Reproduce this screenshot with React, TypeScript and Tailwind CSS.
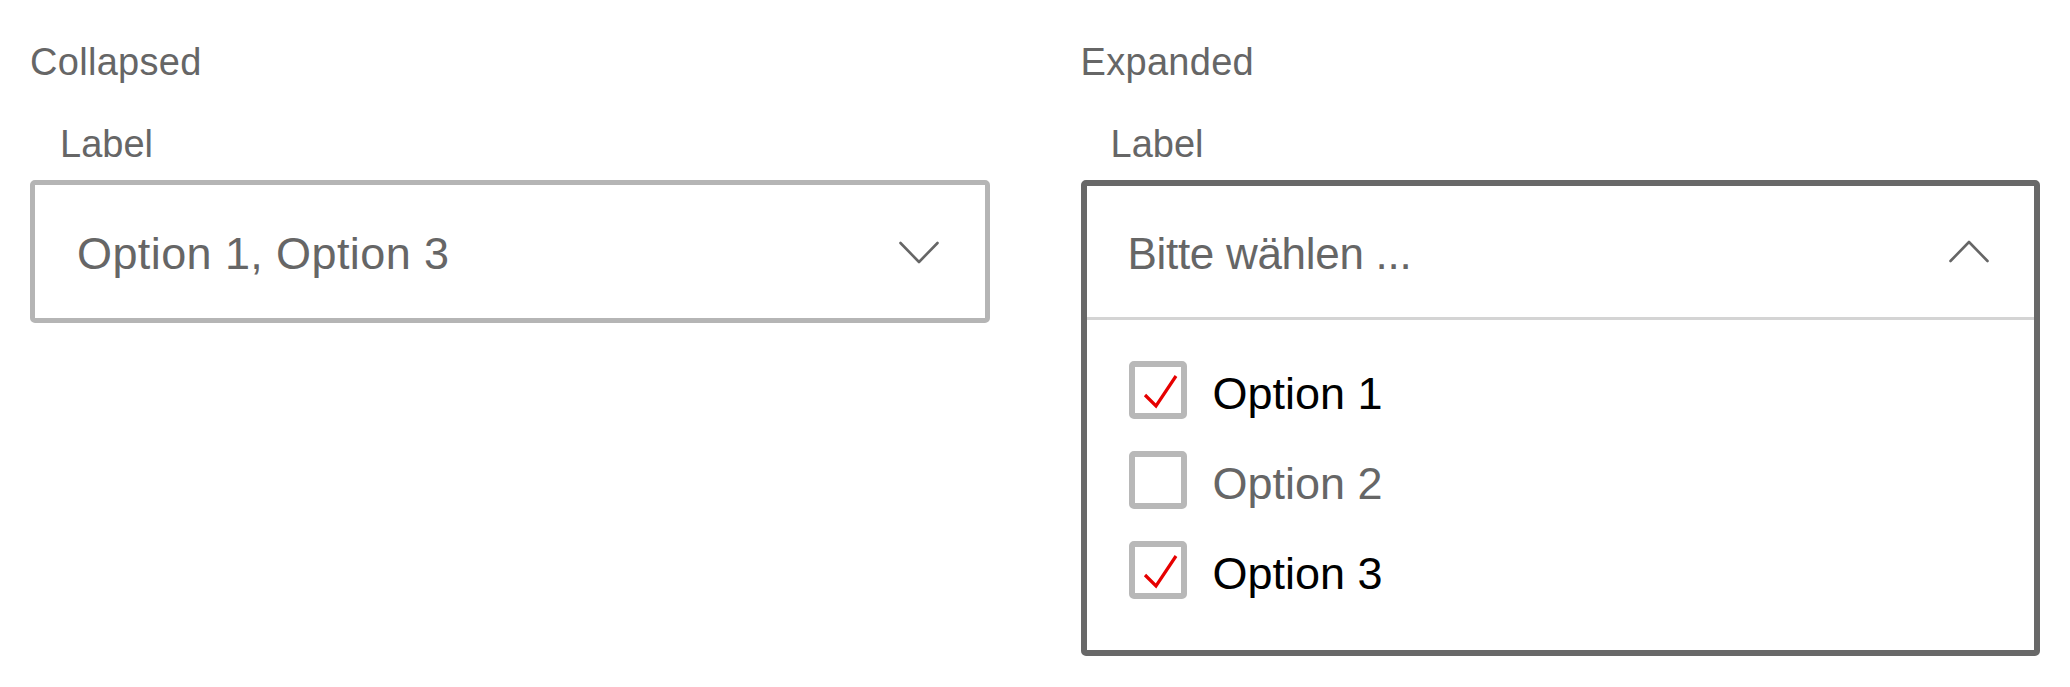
const options = [
  { label: 'Option 1', checked: true },
  { label: 'Option 2', checked: false },
  { label: 'Option 3', checked: true },
];

function Chevron({ up }: { up?: boolean }) {
  return (
    <svg width="40" height="24" viewBox="0 0 40 24" fill="none" className="shrink-0">
      <polyline
        points={up ? '1.5,21 20,2 38.5,21' : '1.5,3 20,22 38.5,3'}
        stroke="#666666"
        strokeWidth="2.6"
        strokeLinecap="round"
        strokeLinejoin="round"
      />
    </svg>
  );
}

function Checkbox({ checked }: { checked: boolean }) {
  return (
    <div className="w-[58px] h-[58px] shrink-0 rounded-[5px] border-[6px] border-[#b8b8b8] bg-white">
      {checked && (
        <svg width="46" height="46" viewBox="0 0 46 46" fill="none">
          <polyline points="10,28 21,39 41,9" stroke="#e60000" strokeWidth="3.2" />
        </svg>
      )}
    </div>
  );
}

export default function App() {
  return (
    <div className="min-h-screen bg-white font-['Liberation_Sans',Arial,sans-serif]">
      <div className="grid grid-cols-2 gap-x-[91px] px-[30px] pt-[43px]">
        {/* collapsed */}
        <div>
          <div className="text-[38px] leading-none text-[#666666] tracking-[0.3px]">Collapsed</div>
          <div className="mt-[44px] pl-[30px] text-[38px] leading-none text-[#666666]">Label</div>
          <div className="mt-[17px] h-[143px] rounded-[5px] border-[5px] border-[#b5b5b5] flex items-center justify-between pl-[42px] pr-[46px]">
            <span className="mt-[4px] text-[45px] leading-none text-[#666666] tracking-[0.4px]">Option 1, Option 3</span>
            <Chevron />
          </div>
        </div>

        {/* expanded */}
        <div>
          <div className="text-[38px] leading-none text-[#666666] tracking-[0.3px]">Expanded</div>
          <div className="mt-[44px] pl-[30px] text-[38px] leading-none text-[#666666]">Label</div>
          <div className="mt-[17px] rounded-[5px] border-[6px] border-[#686868]">
            <div className="h-[131px] flex items-center justify-between pl-[41px] pr-[45px]">
              <span className="mt-[4px] text-[44px] leading-none text-[#666666] tracking-[-0.3px]">Bitte wählen ...</span>
              <Chevron up />
            </div>
            <div className="h-[3px] bg-[#d4d4d4]" />
            <div className="flex flex-col gap-[32px] pl-[42px] pt-[41px] pb-[51px]">
              {options.map((o) => (
                <div key={o.label} className="flex items-center gap-[26px]">
                  <Checkbox checked={o.checked} />
                  <span
                    className={
                      'mt-[6px] text-[45px] leading-none ' + (o.checked ? 'text-black' : 'text-[#666666]')
                    }
                  >
                    {o.label}
                  </span>
                </div>
              ))}
            </div>
          </div>
        </div>
      </div>
    </div>
  );
}
